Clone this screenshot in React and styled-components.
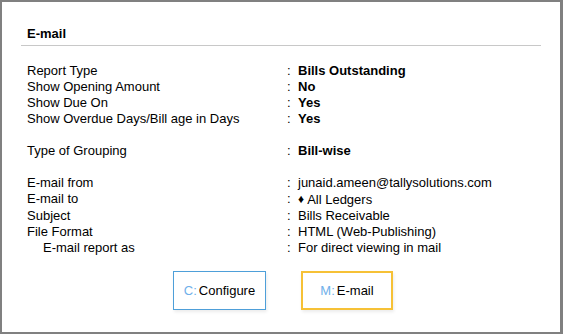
import styled, { createGlobalStyle } from 'styled-components';

const GlobalStyle = createGlobalStyle`
  html, body {
    margin: 0;
    padding: 0;
    background: #ffffff;
  }
  body {
    font-family: 'Liberation Sans', Arial, sans-serif;
    color: #000;
  }
`;

const Frame = styled.div`
  box-sizing: border-box;
  width: 563px;
  height: 334px;
  border-style: solid;
  border-color: #808080;
  border-width: 2px 3px 2px 2px;
  background: #fff;
  padding: 24px 19px 0 19px;
  display: flex;
  flex-direction: column;
`;

const Title = styled.div`
  font-size: 13px;
  line-height: 16px;
  font-weight: 700;
  padding: 0 0 3px 6px;
  border-bottom: 1px solid #c8c8c8;
`;

const Fields = styled.div`
  margin-top: 17px;
  padding-left: 6px;
  display: grid;
  grid-template-columns: 260px 11px 1fr;
  font-size: 13px;
  line-height: 16px;
`;

const Label = styled.div`
  padding-left: ${(p) => (p.$indent ? '16px' : '0')};
`;

const Colon = styled.div``;

const Value = styled.div`
  font-weight: ${(p) => (p.$bold ? 700 : 400)};
`;

const Spacer = styled.div`
  grid-column: 1 / -1;
  height: 16px;
`;

const Diamond = styled.span`
  font-size: 12px;
  margin-right: 3px;
  vertical-align: 1px;
`;

const ButtonBar = styled.div`
  margin-top: 15px;
  display: flex;
  justify-content: center;
  gap: 35px;
  padding-left: 4px;
`;

const Button = styled.button`
  box-sizing: border-box;
  width: ${(p) => (p.$active ? '92px' : '93px')};
  height: 39px;
  background: #fff;
  border: ${(p) => (p.$active ? '2px solid #f6c136' : '1px solid #4e9fd9')};
  box-shadow: 1px 2px 3px rgba(0, 0, 0, 0.08);
  font-family: 'Liberation Sans', Arial, sans-serif;
  font-size: 13px;
  color: #000;
  padding: 0;
  cursor: pointer;
`;

const Key = styled.span`
  color: #6fb0ea;
  margin-right: 2px;
`;

const rows = [
  { label: 'Report Type', value: 'Bills Outstanding', bold: true },
  { label: 'Show Opening Amount', value: 'No', bold: true },
  { label: 'Show Due On', value: 'Yes', bold: true },
  { label: 'Show Overdue Days/Bill age in Days', value: 'Yes', bold: true },
  { spacer: true },
  { label: 'Type of Grouping', value: 'Bill-wise', bold: true },
  { spacer: true },
  { label: 'E-mail from', value: 'junaid.ameen@tallysolutions.com' },
  { label: 'E-mail to', value: 'All Ledgers', diamond: true },
  { label: 'Subject', value: 'Bills Receivable' },
  { label: 'File Format', value: 'HTML (Web-Publishing)' },
  { label: 'E-mail report as', value: 'For direct viewing in mail', indent: true },
];

export default function App() {
  return (
    <>
      <GlobalStyle />
      <Frame>
        <Title>E-mail</Title>
        <Fields>
          {rows.map((r, i) =>
            r.spacer ? (
              <Spacer key={i} />
            ) : (
              <div key={i} style={{ display: 'contents' }}>
                <Label $indent={r.indent}>{r.label}</Label>
                <Colon>:</Colon>
                <Value $bold={r.bold}>
                  {r.diamond && <Diamond>♦</Diamond>}
                  {r.value}
                </Value>
              </div>
            )
          )}
        </Fields>
        <ButtonBar>
          <Button>
            <Key>C:</Key>Configure
          </Button>
          <Button $active>
            <Key>M:</Key>E-mail
          </Button>
        </ButtonBar>
      </Frame>
    </>
  );
}
